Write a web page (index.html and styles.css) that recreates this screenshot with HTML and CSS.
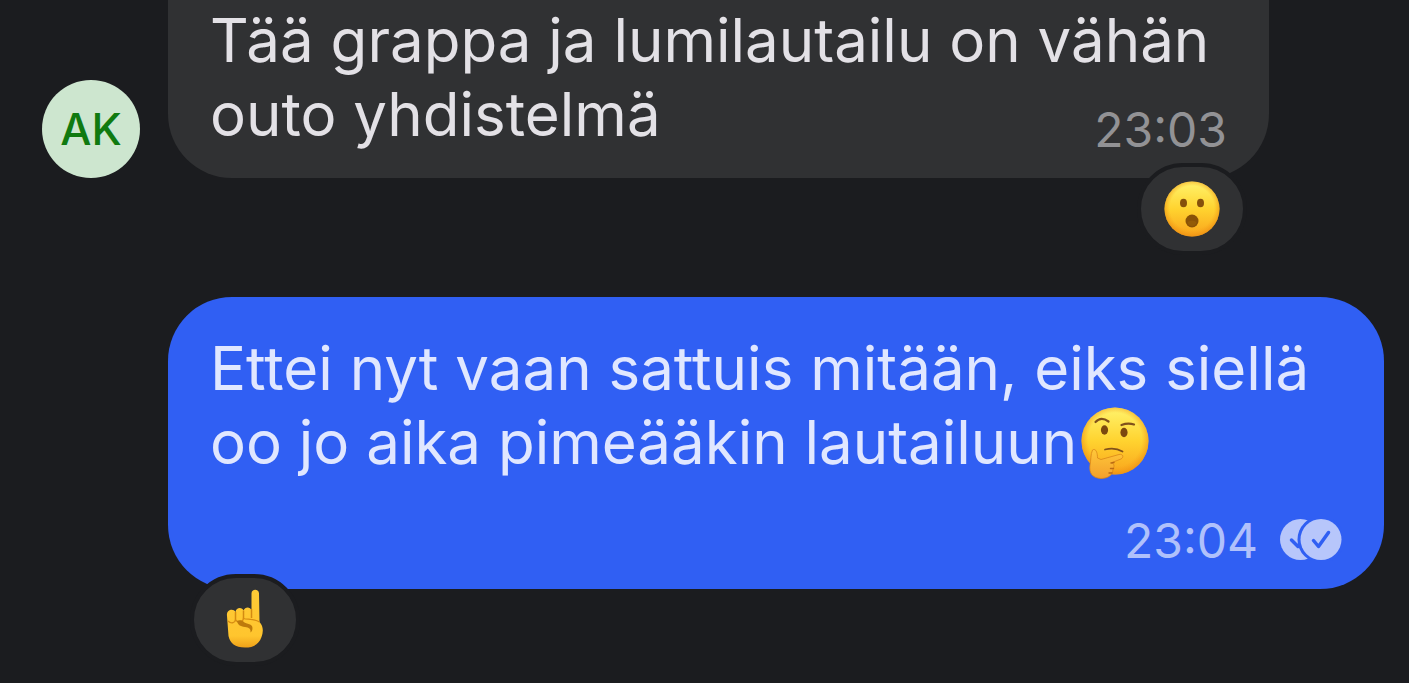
FILE: index.html
```
<!DOCTYPE html>
<html lang="fi">
<head>
<meta charset="utf-8">
<title>Chat</title>
<link rel="stylesheet" href="styles.css">
</head>
<body>
<main class="chat">
  <article class="row row-in">
    <div class="avatar">AK</div>
    <div class="bubble bubble-in">
      <p class="text">Tää grappa ja lumilautailu on vähän<br>outo yhdistelmä</p>
      <time class="time">23:03</time>
      <button class="reaction reaction-right" aria-label="Hämmästynyt">
        <svg class="face" viewBox="0 0 56 56" aria-hidden="true">
          <defs>
            <linearGradient id="skin" x1="0" y1="0" x2="0" y2="1"><stop offset="0" stop-color="#fff36c"/><stop offset=".5" stop-color="#ffd32f"/><stop offset="1" stop-color="#f9a41c"/></linearGradient>
            <radialGradient id="rim" cx=".5" cy=".48" r=".54"><stop offset=".74" stop-color="#f59a16" stop-opacity="0"/><stop offset="1" stop-color="#e88a10" stop-opacity=".8"/></radialGradient>
          </defs>
          <circle cx="28" cy="28" r="27.5" fill="url(#skin)"/>
          <circle cx="28" cy="28" r="27.5" fill="url(#rim)"/>
          <ellipse cx="19.500" cy="22" rx="3.500" ry="4.300" fill="#85500b"/>
          <ellipse cx="36.500" cy="22" rx="3.500" ry="4.300" fill="#85500b"/>
          <circle cx="28" cy="40" r="6.500" fill="#895207"/>
          <path d="M23.500 41Q28 38 32.500 41Q32 45 28 45Q24 45 23.500 41Z" fill="#935b07"/>
        </svg>
      </button>
    </div>
  </article>

  <article class="row row-out">
    <div class="bubble bubble-out">
      <p class="text">Ettei nyt vaan sattuis mitään, eiks siellä<br>oo jo aika pimeääkin lautailuun<svg class="thinking" viewBox="0 0 68 72" role="img" aria-label="Miettivä">
        <defs><linearGradient id="hand" x1="0" y1="0" x2="0" y2="1"><stop offset="0" stop-color="#ffc83a"/><stop offset="1" stop-color="#f3a02c"/></linearGradient></defs>
        <circle cx="34" cy="34" r="33.5" fill="url(#skin)"/>
        <circle cx="34" cy="34" r="33.5" fill="url(#rim)"/>
        <path d="M14.500 15Q20 9 27.500 14.500" fill="none" stroke="#80511b" stroke-width="2.200" stroke-linecap="round"/>
        <path d="M40.500 18Q47 15.500 53 17.500" fill="none" stroke="#80511b" stroke-width="2.200" stroke-linecap="round"/>
        <ellipse cx="23.500" cy="23" rx="3.600" ry="4.700" fill="#7b480f"/>
        <ellipse cx="43" cy="25.500" rx="3.600" ry="4.700" fill="#7b480f"/>
        <path d="M24 42.500Q34 40 41.500 44.500" fill="none" stroke="#80511b" stroke-width="1.800" stroke-linecap="round"/>
        <path d="M11.500 43C14.500 41 16.500 45 16.500 51L20 52.500L38 47.500C41.500 46.500 43.500 50 40 52L31 55.500C34 58 33 60 32 62C32 68 27 71.500 20 71.500C11 71 8 66 9 58C10 54 9.500 47 11.500 43Z" fill="url(#hand)" stroke="#d98518" stroke-width=".8"/>
        <path d="M30 56L33 55.500M29.500 61.500H32.500M28 66H31" fill="none" stroke="#ba6a14" stroke-width="1.400" stroke-linecap="round"/>
      </svg></p>
      <div class="meta">
        <time class="time">23:04</time>
        <svg class="read" viewBox="0 0 62 42" role="img" aria-label="Luettu">
          <circle cx="20.500" cy="20.500" r="20.500" fill="#b7c6fb"/>
          <path d="M11.500 21L18 27.500L27 14" fill="none" stroke="#305ff3" stroke-width="3.500" stroke-linecap="round" stroke-linejoin="round"/>
          <circle cx="41" cy="20.500" r="23.500" fill="#305ff3"/>
          <circle cx="41" cy="20.500" r="20.500" fill="#b7c6fb"/>
          <path d="M33.500 21.500L38.500 27.500L48.500 13.500" fill="none" stroke="#305ff3" stroke-width="3.500" stroke-linecap="round" stroke-linejoin="round"/>
        </svg>
      </div>
      <button class="reaction reaction-left" aria-label="Sormi ylös">
        <svg class="finger" viewBox="0 0 38 59" aria-hidden="true">
          <defs><linearGradient id="palm" x1="0" y1="0" x2="0" y2="1"><stop offset="0" stop-color="#ffcb36"/><stop offset=".8" stop-color="#ffc52e"/><stop offset="1" stop-color="#eea119"/></linearGradient></defs>
          <path d="M25.500 4.500C25.500-.5 33-.5 33 4.500L33.500 33C37.500 37 37.500 43 35.500 48C33 55 28 58.500 19 58.500C9 58.500 4 54 2.500 47L1 27C0 20.500 7.500 19 9.500 23C10 18 16.500 18 17.500 21.500C19 17.500 24 17.500 25.500 21Z" fill="url(#palm)"/>
          <path d="M9.500 23V32M17.500 21.500V30M25.500 20V29" fill="none" stroke="#d38a12" stroke-width="1.500"/>
          <path d="M2 32C5 35 9 34 9.500 31C12 34 17 33 17.500 29.500C21 31 27 29 33.500 33" fill="none" stroke="#d88d13" stroke-width="1.300"/>
          <path d="M11 32C13 30.500 16 31 18 33C20 35 24 34.500 26 37C27 39 26.500 42 24.500 43.500C25 39.500 23 38.500 19 38C14 37.500 11.500 35.500 11 32Z" fill="#bd7a0c"/>
        </svg>
      </button>
    </div>
  </article>
</main>
</body>
</html>
```
FILE: styles.css
```
* { box-sizing: border-box; }
body {
  margin: 0;
  background: #1b1c1f;
  font-family: Inter, "Liberation Sans", sans-serif;
}
.chat {
  display: flex;
  flex-direction: column;
  gap: 119px;
  min-height: 100vh;
  padding-right: 25px;
  padding-left: 42px;
}
.row { display: flex; align-items: flex-end; gap: 28px; }
.row-in { padding-right: 115px; }
.row-out { padding-left: 126px; }
.avatar {
  display: flex;
  flex: none;
  align-items: center;
  justify-content: center;
  width: 98px;
  height: 98px;
  border-radius: 50%;
  background: #cde6cf;
  color: #107a10;
  font-size: 44px;
  font-weight: 500;
}
.bubble { position: relative; flex: 1; min-width: 0; padding: 34px 42px 19px; }
.bubble-in {
  display: grid;
  padding-top: 3px;
  border-radius: 0 0 64px 64px;
  background: #303133;
  color: #e3e1e6;
}
.bubble-in .text, .bubble-in .time { grid-area: 1 / 1; }
.bubble-out { border-radius: 64px; background: #305ff3; color: #e0e7ff; }
.text {
  margin: 0;
  font-size: 60px;
  font-weight: 400;
  line-height: 74px;
}
.bubble-in .text { padding-bottom: 8px; }
.time { font-size: 48px; font-weight: 400; line-height: 58px; }
.bubble-in .time { place-self: end; color: #929295; }
.bubble-out .time { color: #b0c1fb; }
.meta {
  display: flex;
  align-items: center;
  justify-content: flex-end;
  gap: 22px;
  padding-top: 33px;
}
.read { width: 62px; height: 42px; margin-bottom: 3px; }
.thinking { width: 68px; height: 72px; margin: -12px 0 -12px 4px; vertical-align: -3px; }
.reaction {
  position: absolute;
  display: flex;
  align-items: center;
  justify-content: center;
  width: 110px;
  height: 92px;
  padding: 0;
  border: 4px solid #1b1c1f;
  border-radius: 46px;
  background: #303133;
}
.reaction-right { right: 22px; bottom: -77px; }
.reaction-left { left: 22px; bottom: -77px; }
.face { width: 56px; height: 56px; }
.finger { width: 38px; height: 59px; margin-bottom: 3px; }
```
